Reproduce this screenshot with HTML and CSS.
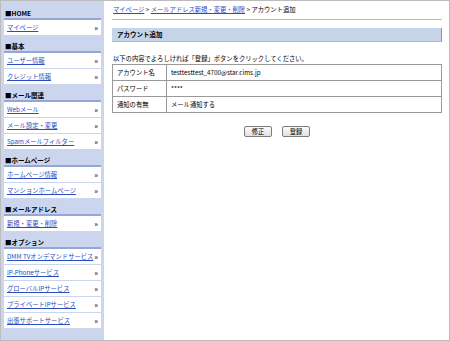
FILE: index.html
```html
<!DOCTYPE html>
<html lang="ja">
<head>
    <meta charset="UTF-8">
    <meta name="viewport" content="width=device-width, initial-scale=1.0">
    <title>アカウント追加</title>
    <link rel="stylesheet" href="styles.css">
</head>
<body>
    <div class="frame">
        <nav class="side">
            <div class="side-group">
                <h3 class="side-head">■HOME</h3>
                <ul class="side-list">
                    <li><a href="#">マイページ</a><span class="arr">»</span></li>
                </ul>
            </div>
            <div class="side-group">
                <h3 class="side-head">■基本</h3>
                <ul class="side-list">
                    <li><a href="#">ユーザー情報</a><span class="arr">»</span></li>
                    <li><a href="#">クレジット情報</a><span class="arr">»</span></li>
                </ul>
            </div>
            <div class="side-group">
                <h3 class="side-head">■メール関連</h3>
                <ul class="side-list">
                    <li><a href="#">Webメール</a><span class="arr">»</span></li>
                    <li><a href="#">メール設定・変更</a><span class="arr">»</span></li>
                    <li><a href="#">Spamメールフィルター</a><span class="arr">»</span></li>
                </ul>
            </div>
            <div class="side-group">
                <h3 class="side-head">■ホームページ</h3>
                <ul class="side-list">
                    <li><a href="#">ホームページ情報</a><span class="arr">»</span></li>
                    <li><a href="#">マンションホームページ</a><span class="arr">»</span></li>
                </ul>
            </div>
            <div class="side-group">
                <h3 class="side-head">■メールアドレス</h3>
                <ul class="side-list">
                    <li><a href="#">新規・変更・削除</a><span class="arr">»</span></li>
                </ul>
            </div>
            <div class="side-group">
                <h3 class="side-head">■オプション</h3>
                <ul class="side-list">
                    <li><a href="#">DMM TVオンデマンドサービス</a><span class="arr">»</span></li>
                    <li><a href="#">IP-Phoneサービス</a><span class="arr">»</span></li>
                    <li><a href="#">グローバルIPサービス</a><span class="arr">»</span></li>
                    <li><a href="#">プライベートIPサービス</a><span class="arr">»</span></li>
                    <li><a href="#">出張サポートサービス</a><span class="arr">»</span></li>
                </ul>
            </div>
        </nav>

        <main class="content">
            <p class="crumbs"><a href="#">マイページ</a> &gt; <a href="#">メールアドレス新規・変更・削除</a> &gt; アカウント追加</p>
            <h2 class="title">アカウント追加</h2>
            <p class="lead">以下の内容でよろしければ「登録」ボタンをクリックしてください。</p>
            <table class="confirm">
                <tr>
                    <th>アカウント名</th>
                    <td>testtesttest_4700@star.cims.jp</td>
                </tr>
                <tr>
                    <th>パスワード</th>
                    <td>****</td>
                </tr>
                <tr>
                    <th>通知の有無</th>
                    <td>メール通知する</td>
                </tr>
            </table>
            <div class="actions">
                <button type="button">修正</button>
                <button type="button">登録</button>
            </div>
        </main>
    </div>
</body>
</html>
```

FILE: styles.css
```css
* {
    box-sizing: border-box;
}

body {
    margin: 0;
    font-family: "Noto Sans CJK JP", "Liberation Sans", sans-serif;
    font-size: 6.3px;
    color: #000;
    background-color: #fff;
}

a {
    color: #2c4cc0;
    text-decoration: underline;
}

.frame {
    display: flex;
    width: 450px;
    height: 341px;
    border: 1px solid #bcbcbc;
    overflow: hidden;
}

/* sidebar */
.side {
    flex-shrink: 0;
    width: 103px;
    padding: 7px 3px 0 3px;
    background-color: #cbd6ee;
}

.side-group {
    margin-bottom: 6px;
}

.side-head {
    margin: 0;
    padding-left: 1px;
    font-size: 6.5px;
    font-weight: bold;
    line-height: 10px;
    border-bottom: 2px solid #93a6d6;
}

.side-list {
    list-style: none;
    margin: 0;
    padding: 0;
}

.side-list li {
    display: flex;
    align-items: center;
    height: 15px;
    margin-bottom: 1px;
    padding: 0 3px;
    background-color: #fff;
    white-space: nowrap;
}

.side-list a {
    flex: 1;
    min-width: 0;
    overflow: hidden;
}

.arr {
    color: #1b2b66;
    font-weight: bold;
    font-size: 7px;
}

/* main column */
.content {
    flex: 1;
    padding: 0 7px 0 8px;
}

.crumbs {
    margin: 0;
    padding: 4px 0 4px 1px;
    line-height: 10px;
    border-bottom: 1px solid #a9bad8;
}

.title {
    margin: 8px 0 0;
    padding-left: 5px;
    font-size: 6.5px;
    font-weight: bold;
    line-height: 13px;
    background-color: #c6d4ea;
    border-right: 1px solid #8199c6;
    border-bottom: 1px solid #a9bad8;
}

.lead {
    margin: 12px 0 0;
    padding-left: 1px;
    line-height: 10px;
}

.confirm {
    width: 100%;
    border-collapse: collapse;
    border: 1px solid #9a9a9a;
}

.confirm th,
.confirm td {
    height: 16px;
    padding: 0 4px;
    border: 1px solid #9a9a9a;
    font-weight: normal;
    text-align: left;
    line-height: 14px;
}

.confirm th {
    width: 54px;
}

.actions {
    display: flex;
    justify-content: center;
    gap: 10px;
    margin-top: 13px;
}

.actions button {
    width: 28px;
    height: 11px;
    padding: 0;
    font-family: inherit;
    font-size: 6.3px;
    line-height: 9px;
    color: #000;
    background: linear-gradient(#fbfbfb, #e2e2e2);
    border: 1px solid #7c7c7c;
    border-radius: 2px;
}
```
